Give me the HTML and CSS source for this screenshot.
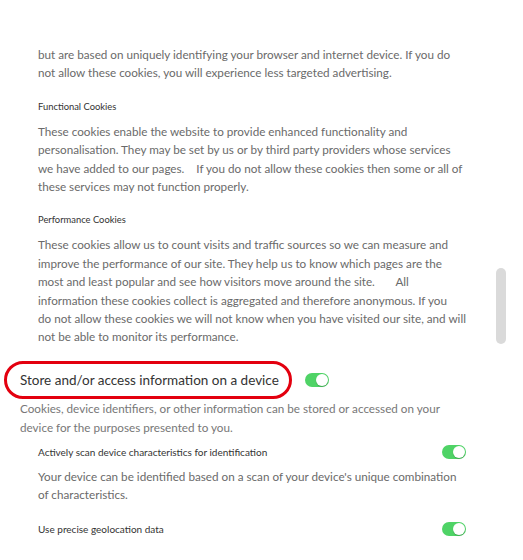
FILE: index.html
```html
<!DOCTYPE html>
<html lang="en">
<head>
    <meta charset="UTF-8">
    <meta name="viewport" content="width=device-width, initial-scale=1.0">
    <title>Privacy Settings</title>
    <link rel="stylesheet" href="styles.css">
</head>
<body>
    <div class="panel">
        <div class="categories">
            <p class="cat-text">but are based on uniquely identifying your browser and internet device. If you do not allow these cookies, you will experience less targeted advertising.</p>

            <h4 class="cat-title">Functional Cookies</h4>
            <p class="cat-text">These cookies enable the website to provide enhanced functionality and personalisation. They may be set by us or by third party providers whose services we&nbsp;have added to our pages. &nbsp;&nbsp; If you do not allow these cookies then some or all of these services may not function properly.</p>

            <h4 class="cat-title">Performance Cookies</h4>
            <p class="cat-text">These cookies allow us to count visits and traffic sources so we can measure and improve the performance of our site. They help us to know which pages are the most and least popular and see how visitors move around the site. &nbsp;&nbsp;&nbsp;&nbsp;&nbsp; All information these cookies collect is aggregated and therefore anonymous. If you do&nbsp;not allow these cookies we will not know when you have visited our site, and will not be able to monitor its performance.</p>
        </div>

        <div class="purpose">
            <div class="purpose-head">
                <h3 class="purpose-title">Store and/or access information on a device</h3>
                <span class="toggle on"></span>
            </div>
            <p class="purpose-text">Cookies, device identifiers, or other information can be stored or accessed on your device for the purposes presented to you.</p>

            <div class="feature">
                <div class="feature-head">
                    <span class="feature-title">Actively scan device characteristics for identification</span>
                    <span class="toggle on"></span>
                </div>
                <p class="cat-text">Your device can be identified based on a scan of your device's unique combination of characteristics.</p>
            </div>

            <div class="feature">
                <div class="feature-head">
                    <span class="feature-title">Use precise geolocation data</span>
                    <span class="toggle on"></span>
                </div>
            </div>
        </div>

        <div class="scrollbar"></div>
    </div>
</body>
</html>
```

FILE: styles.css
```css
body {
    margin: 0;
    background: #fff;
    font-family: 'Lato', 'Open Sans', sans-serif;
    color: #666;
}

.panel {
    position: relative;
    height: 560px;
    overflow: hidden;
    padding: 45px 0 0 20px;
    box-sizing: border-box;
}

.categories {
    padding-left: 18px;
    width: 430px;
}

.cat-text {
    margin: 0;
    font-size: 11.7px;
    line-height: 18.4px;
    color: #6a6a6a;
}

.cat-title {
    margin: 18px 0 8px;
    font-size: 9.4px;
    line-height: 14px;
    font-weight: normal;
    color: #333;
}

.purpose {
    margin-top: 15px;
}

.purpose-head {
    display: flex;
    align-items: center;
    gap: 13px;
    margin-left: -16px;
}

.purpose-title {
    margin: 0;
    height: 32px;
    display: flex;
    align-items: center;
    padding: 0 10px 0 13px;
    border: 3px solid #e3000f;
    border-radius: 20px;
    font-size: 13.5px;
    font-weight: normal;
    color: #333;
}

.purpose-text {
    margin: 0;
    width: 446px;
    font-size: 11.7px;
    line-height: 19px;
    color: #777;
}

.feature {
    padding-left: 18px;
    width: 428px;
}

.feature-head {
    display: flex;
    align-items: center;
    justify-content: space-between;
    margin: 8px 0;
}

.feature + .feature .feature-head {
    margin-top: 18px;
}

.feature-title {
    font-size: 10px;
    color: #333;
}

.toggle {
    position: relative;
    display: inline-block;
    width: 24px;
    height: 14px;
    border-radius: 7px;
    background: #ccc;
}

.toggle::after {
    content: "";
    position: absolute;
    top: 1px;
    left: 1px;
    width: 12px;
    height: 12px;
    border-radius: 50%;
    background: #fff;
    box-shadow: 0 1px 1px rgba(0, 0, 0, 0.2);
}

.toggle.on {
    background: #4fd366;
}

.toggle.on::after {
    left: 11px;
}

.scrollbar {
    position: absolute;
    top: 268px;
    left: 496px;
    width: 10px;
    height: 76px;
    border-radius: 5px;
    background: #dadada;
}
```
